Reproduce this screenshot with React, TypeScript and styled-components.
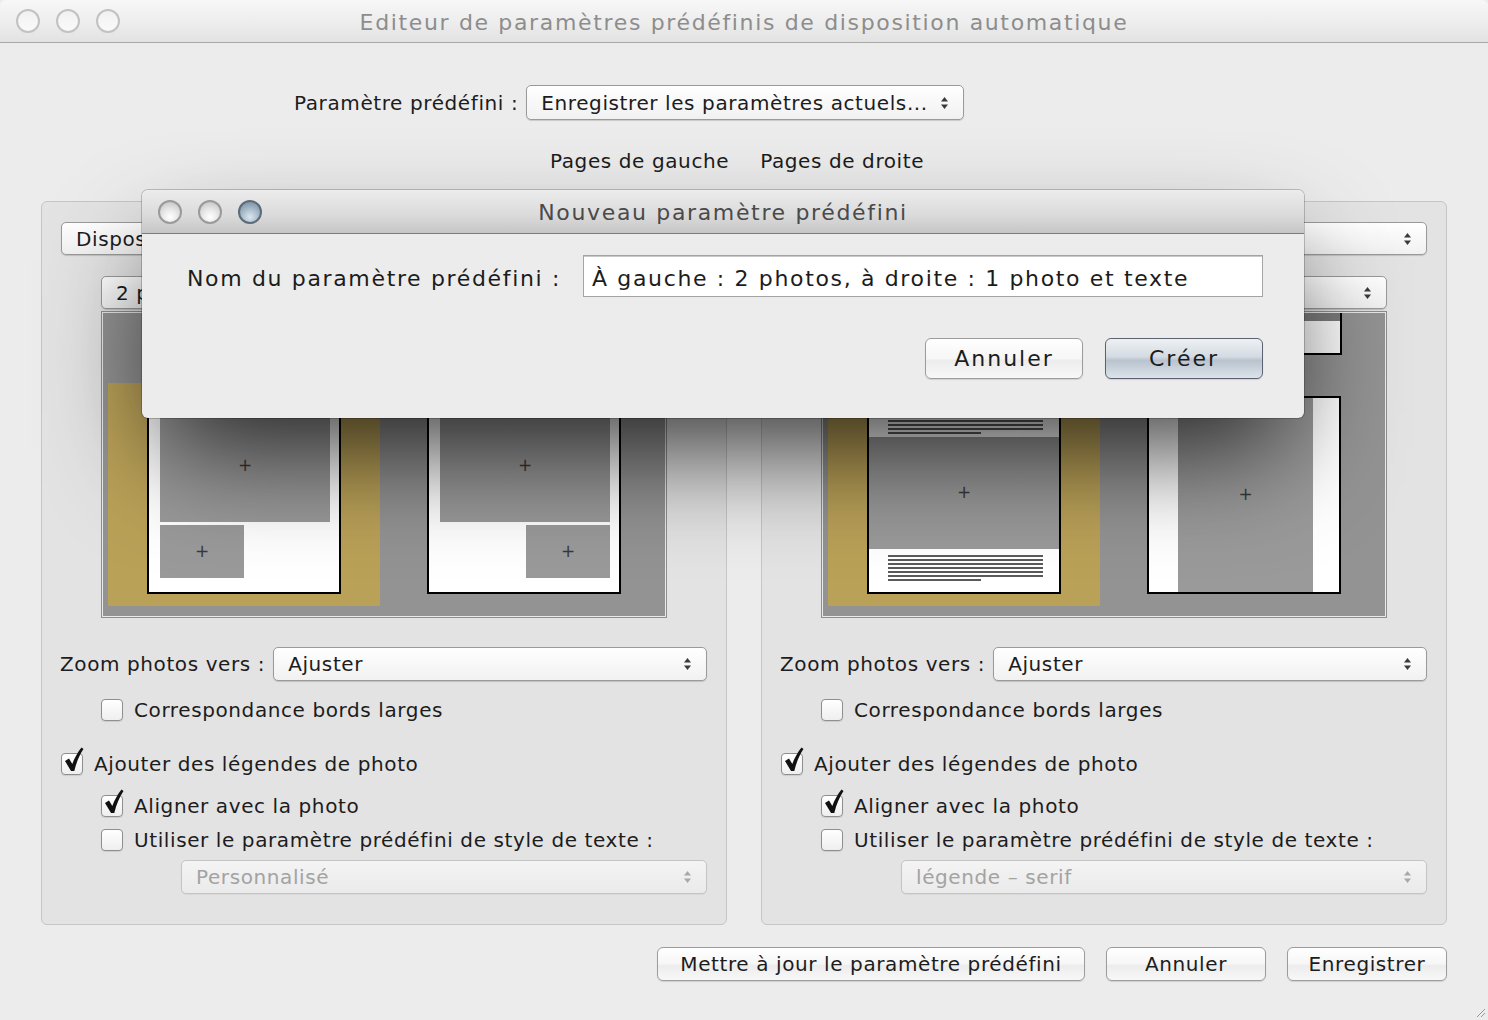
import React from "react";
import styled, { createGlobalStyle, css } from "styled-components";

const MAIN_FONT = `"DejaVu Sans", "Liberation Sans", sans-serif`;

const GlobalStyle = createGlobalStyle`
  html, body {
    margin: 0;
    padding: 0;
    width: 1488px;
    height: 1020px;
    overflow: hidden;
    background: #ececec;
  }
  body {
    font-family: ${MAIN_FONT};
    color: #1c1c1c;
  }
  * {
    box-sizing: border-box;
  }
`;

/* ---------- window chrome ---------- */

const Window = styled.div`
  position: relative;
  width: 1488px;
  height: 1020px;
  background: #ececec;
  display: flex;
  flex-direction: column;
  letter-spacing: 0.6px;
`;

const TitleBar = styled.div<{ $height: number; $active?: boolean }>`
  height: ${(p) => p.$height}px;
  flex-shrink: 0;
  display: grid;
  grid-template-columns: 1fr auto 1fr;
  align-items: center;
  padding: 0 16px;
  border-bottom: 1px solid ${(p) => (p.$active ? "#7b7b7b" : "#a8a8a8")};
  background: ${(p) =>
    p.$active
      ? "linear-gradient(#ececec, #dadada 60%, #c6c6c6)"
      : "linear-gradient(#f7f7f7, #ececec 60%, #e2e2e2)"};
  border-radius: 6px 6px 0 0;
`;

const Lights = styled.div`
  display: flex;
  gap: 16px;
`;

const Light = styled.span<{ $kind: "hollow" | "gray" | "blue" }>`
  width: 24px;
  height: 24px;
  border-radius: 50%;
  ${(p) =>
    p.$kind === "hollow"
      ? css`
          border: 2px solid #c2c2c2;
          background: linear-gradient(#f1f1f1, #fafafa);
        `
      : p.$kind === "gray"
      ? css`
          border: 2px solid #9a9a9a;
          background: radial-gradient(circle at 50% 75%, #ffffff 0%, #e6e6e6 45%, #bdbdbd 100%);
        `
      : css`
          border: 2px solid #5d6b78;
          background: radial-gradient(circle at 50% 75%, #dbe6ef 0%, #a9bccb 45%, #6f8496 100%);
        `}
`;

const TitleText = styled.div<{ $active?: boolean }>`
  font-size: 22px;
  letter-spacing: 1.65px;
  padding-top: 2px;
  color: ${(p) => (p.$active ? "#4a4a4a" : "#8d8d8d")};
  white-space: nowrap;
`;

/* ---------- controls ---------- */

const PopUp = styled.div<{ $height?: number; $width?: number; $disabled?: boolean }>`
  ${(p) => (p.$width ? `flex: 0 0 ${p.$width}px;` : "flex: 1;")}
  height: ${(p) => p.$height ?? 34}px;
  display: flex;
  align-items: center;
  justify-content: space-between;
  padding: 0 14px;
  border: 1px solid ${(p) => (p.$disabled ? "#c4c4c4" : "#9a9a9a")};
  border-radius: 5px;
  background: ${(p) =>
    p.$disabled ? "linear-gradient(#f4f4f4, #eaeaea)" : "linear-gradient(#ffffff, #f1f1f1)"};
  box-shadow: 0 1px 1px rgba(0, 0, 0, ${(p) => (p.$disabled ? 0.05 : 0.15)});
  font-size: 20px;
  color: ${(p) => (p.$disabled ? "#a3a3a3" : "#1c1c1c")};
  white-space: nowrap;
  overflow: hidden;
`;

const Arrows = ({ faded }: { faded?: boolean }) => (
  <svg width="9" height="14" viewBox="0 0 9 14" style={{ flexShrink: 0 }}>
    <path d="M4.5 1 L8 5.5 H1 Z" fill={faded ? "#a8a8a8" : "#3a3a3a"} />
    <path d="M4.5 13 L8 8.5 H1 Z" fill={faded ? "#a8a8a8" : "#3a3a3a"} />
  </svg>
);

const Label = styled.span`
  font-size: 20px;
  white-space: nowrap;
`;

const Button = styled.div<{ $width: number; $height?: number; $default?: boolean; $big?: boolean }>`
  width: ${(p) => p.$width}px;
  height: ${(p) => p.$height ?? 34}px;
  display: flex;
  align-items: center;
  justify-content: center;
  border-radius: 6px;
  white-space: nowrap;
  font-size: ${(p) => (p.$big ? 22 : 20)}px;
  letter-spacing: ${(p) => (p.$big ? 2 : 0.6)}px;
  color: #1c1c1c;
  ${(p) =>
    p.$default
      ? css`
          border: 1px solid #5c6272;
          background: linear-gradient(#eef1f4, #d4dbe3 45%, #b9c3ce 55%, #dde3ea);
        `
      : css`
          border: 1px solid #9c9c9c;
          background: linear-gradient(#ffffff, #f6f6f6 50%, #ececec 55%, #f8f8f8);
        `}
  box-shadow: 0 1px 1px rgba(0, 0, 0, 0.12);
`;

const CheckRow = styled.div<{ $indent: number; $top: number }>`
  display: flex;
  align-items: center;
  gap: 11px;
  height: 24px;
  margin-top: ${(p) => p.$top}px;
  padding-left: ${(p) => p.$indent}px;
`;

const Box = styled.span`
  position: relative;
  width: 22px;
  height: 22px;
  flex-shrink: 0;
  border: 1px solid #8f8f8f;
  border-radius: 4px;
  background: linear-gradient(#ffffff, #efefef);
  box-shadow: 0 1px 1px rgba(0, 0, 0, 0.1);
`;

const Tick = styled.svg`
  position: absolute;
  left: 2px;
  top: -7px;
`;

const Check = ({ checked, children }: { checked?: boolean; children: React.ReactNode }) => (
  <>
    <Box>
      {checked && (
        <Tick width="20" height="26" viewBox="0 0 20 26">
          <path
            d="M1 14 L5 11.5 L8.3 17 C10.5 11 13.5 5.5 17.5 0.5 L19.5 2 C15.5 8 12.5 15 10.3 24 L7 24 Z"
            fill="#111"
          />
        </Tick>
      )}
    </Box>
    <Label>{children}</Label>
  </>
);

/* ---------- main body ---------- */

const Body = styled.div`
  flex: 1;
  display: flex;
  flex-direction: column;
`;

const PresetRow = styled.div`
  display: flex;
  align-items: center;
  gap: 8px;
  margin-top: 42px;
  padding-left: 294px;
`;

const TabsRow = styled.div`
  display: flex;
  gap: 31px;
  margin-top: 26px;
  padding-left: 550px;
  font-size: 20px;
  height: 30px;
  align-items: center;
`;

const Panels = styled.div`
  display: flex;
  gap: 34px;
  padding: 0 41px;
  margin-top: 25px;
`;

const Panel = styled.div`
  width: 686px;
  height: 724px;
  border: 1px solid #c6c6c6;
  border-radius: 6px;
  background: #e3e3e3;
  display: flex;
  flex-direction: column;
`;

const SelectLine = styled.div<{ $pad: number; $top: number; $right?: number }>`
  display: flex;
  align-items: center;
  gap: 8px;
  margin-top: ${(p) => p.$top}px;
  padding: 0 ${(p) => p.$right ?? p.$pad}px 0 ${(p) => p.$pad}px;
`;

const Preview = styled.div`
  position: relative;
  height: 307px;
  margin: 2px 59px 0 59px;
  border: 1px solid #8e8e8e;
  box-shadow: inset 0 0 0 1px #e9e9e9;
  background: #939393;
  display: flex;
  align-items: flex-end;
  gap: 8px;
  padding: 0 6px 11px 6px;
  overflow: hidden;
`;

const Slot = styled.div<{ $selected?: boolean }>`
  width: 272px;
  height: 223px;
  display: flex;
  align-items: center;
  justify-content: center;
  background: ${(p) => (p.$selected ? "#baa158" : "transparent")};
`;

const Page = styled.div<{ $pad?: string }>`
  width: 194px;
  height: 198px;
  border: 2px solid #000;
  background: #fff;
  display: flex;
  flex-direction: column;
  padding: ${(p) => p.$pad ?? "0"};
`;

const Photo = styled.div<{ $w?: number; $h?: number }>`
  ${(p) => (p.$w ? `width: ${p.$w}px;` : "")}
  ${(p) => (p.$h ? `height: ${p.$h}px;` : "flex: 1;")}
  flex-shrink: 0;
  background: #9a9a9a;
  display: flex;
  align-items: center;
  justify-content: center;
  font-size: 17px;
  line-height: 1;
  letter-spacing: 0;
  color: #383838;
`;

const PhotoRow = styled.div<{ $right?: boolean }>`
  display: flex;
  justify-content: ${(p) => (p.$right ? "flex-end" : "flex-start")};
  margin-top: 3px;
`;

const TextBlock = styled.div<{ $top: number; $bottom: number }>`
  display: flex;
  flex-direction: column;
  gap: 2px;
  padding: ${(p) => p.$top}px 16px ${(p) => p.$bottom}px 19px;
`;

const TextLine = styled.span<{ $short?: boolean }>`
  display: block;
  height: 2px;
  width: ${(p) => (p.$short ? "60%" : "100%")};
  background: #5a5a5a;
`;

const Stray = styled.div`
  position: absolute;
  left: 420px;
  top: 1px;
  width: 100px;
  height: 42px;
  border-right: 2px solid #000;
  border-bottom: 2px solid #000;
  background: linear-gradient(#7d7d7d 0 8px, #ffffff 8px);
`;

const Lines = ({ top, bottom }: { top: number; bottom: number }) => (
  <TextBlock $top={top} $bottom={bottom}>
    {[0, 1, 2, 3, 4, 5].map((i) => (
      <TextLine key={i} />
    ))}
    <TextLine $short />
  </TextBlock>
);

const BottomBar = styled.div`
  display: flex;
  justify-content: flex-end;
  gap: 21px;
  padding-right: 41px;
  margin-top: 22px;
`;

const Grip = styled.svg`
  position: absolute;
  right: 2px;
  bottom: 2px;
`;

/* ---------- dialog ---------- */

const Dialog = styled.div`
  position: absolute;
  left: 142px;
  top: 190px;
  width: 1162px;
  height: 228px;
  border-radius: 6px;
  background: #ececec;
  box-shadow: 0 0 0 1px rgba(0, 0, 0, 0.2), 0 50px 110px -20px rgba(0, 0, 0, 0.78);
  display: flex;
  flex-direction: column;
  font-size: 22px;
  letter-spacing: 1.65px;
`;

const DialogBody = styled.div`
  flex: 1;
  display: flex;
  flex-direction: column;
  padding: 21px 41px 0 45px;
  border-radius: 0 0 6px 6px;
`;

const NameRow = styled.div`
  display: flex;
  align-items: center;
  gap: 22px;
`;

const NameLabel = styled.span`
  padding-top: 4px;
  white-space: nowrap;
`;

const NameField = styled.div`
  flex: 1;
  height: 42px;
  display: flex;
  align-items: center;
  padding: 4px 0 0 8px;
  background: #fff;
  border: 1px solid #a4a4a4;
  box-shadow: inset 0 1px 0 #c8c8c8;
  white-space: nowrap;
`;

const DialogButtons = styled.div`
  display: flex;
  justify-content: flex-end;
  gap: 22px;
  margin-top: 41px;
`;

type SideProps = {
  right?: boolean;
  styleValue: string;
};

const Side = ({ right, styleValue }: SideProps) => (
  <Panel>
    <SelectLine $pad={19} $top={20}>
      <PopUp $height={33}>
        <span>Disposition personnalisée</span>
        <Arrows />
      </PopUp>
    </SelectLine>
    <SelectLine $pad={59} $top={21}>
      <PopUp $height={33}>
        <span>{right ? "1 photo et texte" : "2 photos"}</span>
        <Arrows />
      </PopUp>
    </SelectLine>
    <Preview>
      {right && <Stray />}
      <Slot $selected>
        {right ? (
          <Page>
            <Lines top={10} bottom={3} />
            <Photo $h={112}>+</Photo>
            <Lines top={6} bottom={0} />
          </Page>
        ) : (
          <Page $pad="11px 9px 0 11px">
            <Photo $h={113}>+</Photo>
            <PhotoRow>
              <Photo $w={84} $h={53}>
                +
              </Photo>
            </PhotoRow>
          </Page>
        )}
      </Slot>
      <Slot>
        {right ? (
          <Page $pad="0 26px 0 29px">
            <Photo>+</Photo>
          </Page>
        ) : (
          <Page $pad="11px 9px 0 11px">
            <Photo $h={113}>+</Photo>
            <PhotoRow $right>
              <Photo $w={84} $h={53}>
                +
              </Photo>
            </PhotoRow>
          </Page>
        )}
      </Slot>
    </Preview>
    <SelectLine $pad={18} $right={19} $top={29}>
      <Label>Zoom photos vers :</Label>
      <PopUp>
        <span>Ajuster</span>
        <Arrows />
      </PopUp>
    </SelectLine>
    <CheckRow $indent={59} $top={17}>
      <Check>Correspondance bords larges</Check>
    </CheckRow>
    <CheckRow $indent={19} $top={30}>
      <Check checked>Ajouter des légendes de photo</Check>
    </CheckRow>
    <CheckRow $indent={59} $top={18}>
      <Check checked>Aligner avec la photo</Check>
    </CheckRow>
    <CheckRow $indent={59} $top={10}>
      <Check>Utiliser le paramètre prédéfini de style de texte :</Check>
    </CheckRow>
    <SelectLine $pad={139} $right={19} $top={8}>
      <PopUp $disabled>
        <span>{styleValue}</span>
        <Arrows faded />
      </PopUp>
    </SelectLine>
  </Panel>
);

export default function App() {
  return (
    <Window>
      <GlobalStyle />
      <TitleBar $height={43}>
        <Lights>
          <Light $kind="hollow" />
          <Light $kind="hollow" />
          <Light $kind="hollow" />
        </Lights>
        <TitleText>Editeur de paramètres prédéfinis de disposition automatique</TitleText>
        <span />
      </TitleBar>
      <Body>
        <PresetRow>
          <Label>Paramètre prédéfini :</Label>
          <PopUp $height={35} $width={438}>
            <span>Enregistrer les paramètres actuels...</span>
            <Arrows />
          </PopUp>
        </PresetRow>
        <TabsRow>
          <span>Pages de gauche</span>
          <span>Pages de droite</span>
        </TabsRow>
        <Panels>
          <Side styleValue="Personnalisé" />
          <Side right styleValue="légende – serif" />
        </Panels>
        <BottomBar>
          <Button $width={428}>Mettre à jour le paramètre prédéfini</Button>
          <Button $width={160}>Annuler</Button>
          <Button $width={160}>Enregistrer</Button>
        </BottomBar>
      </Body>
      <Grip width="12" height="12" viewBox="0 0 12 12">
        <path d="M11 3 L3 11 M11 7 L7 11" stroke="#9a9a9a" strokeWidth="1" />
      </Grip>

      <Dialog>
        <TitleBar $height={44} $active>
          <Lights>
            <Light $kind="gray" />
            <Light $kind="gray" />
            <Light $kind="blue" />
          </Lights>
          <TitleText $active>Nouveau paramètre prédéfini</TitleText>
          <span />
        </TitleBar>
        <DialogBody>
          <NameRow>
            <NameLabel>Nom du paramètre prédéfini :</NameLabel>
            <NameField>À gauche : 2 photos, à droite : 1 photo et texte</NameField>
          </NameRow>
          <DialogButtons>
            <Button $width={158} $height={41} $big>
              Annuler
            </Button>
            <Button $width={158} $height={41} $big $default>
              Créer
            </Button>
          </DialogButtons>
        </DialogBody>
      </Dialog>
    </Window>
  );
}
